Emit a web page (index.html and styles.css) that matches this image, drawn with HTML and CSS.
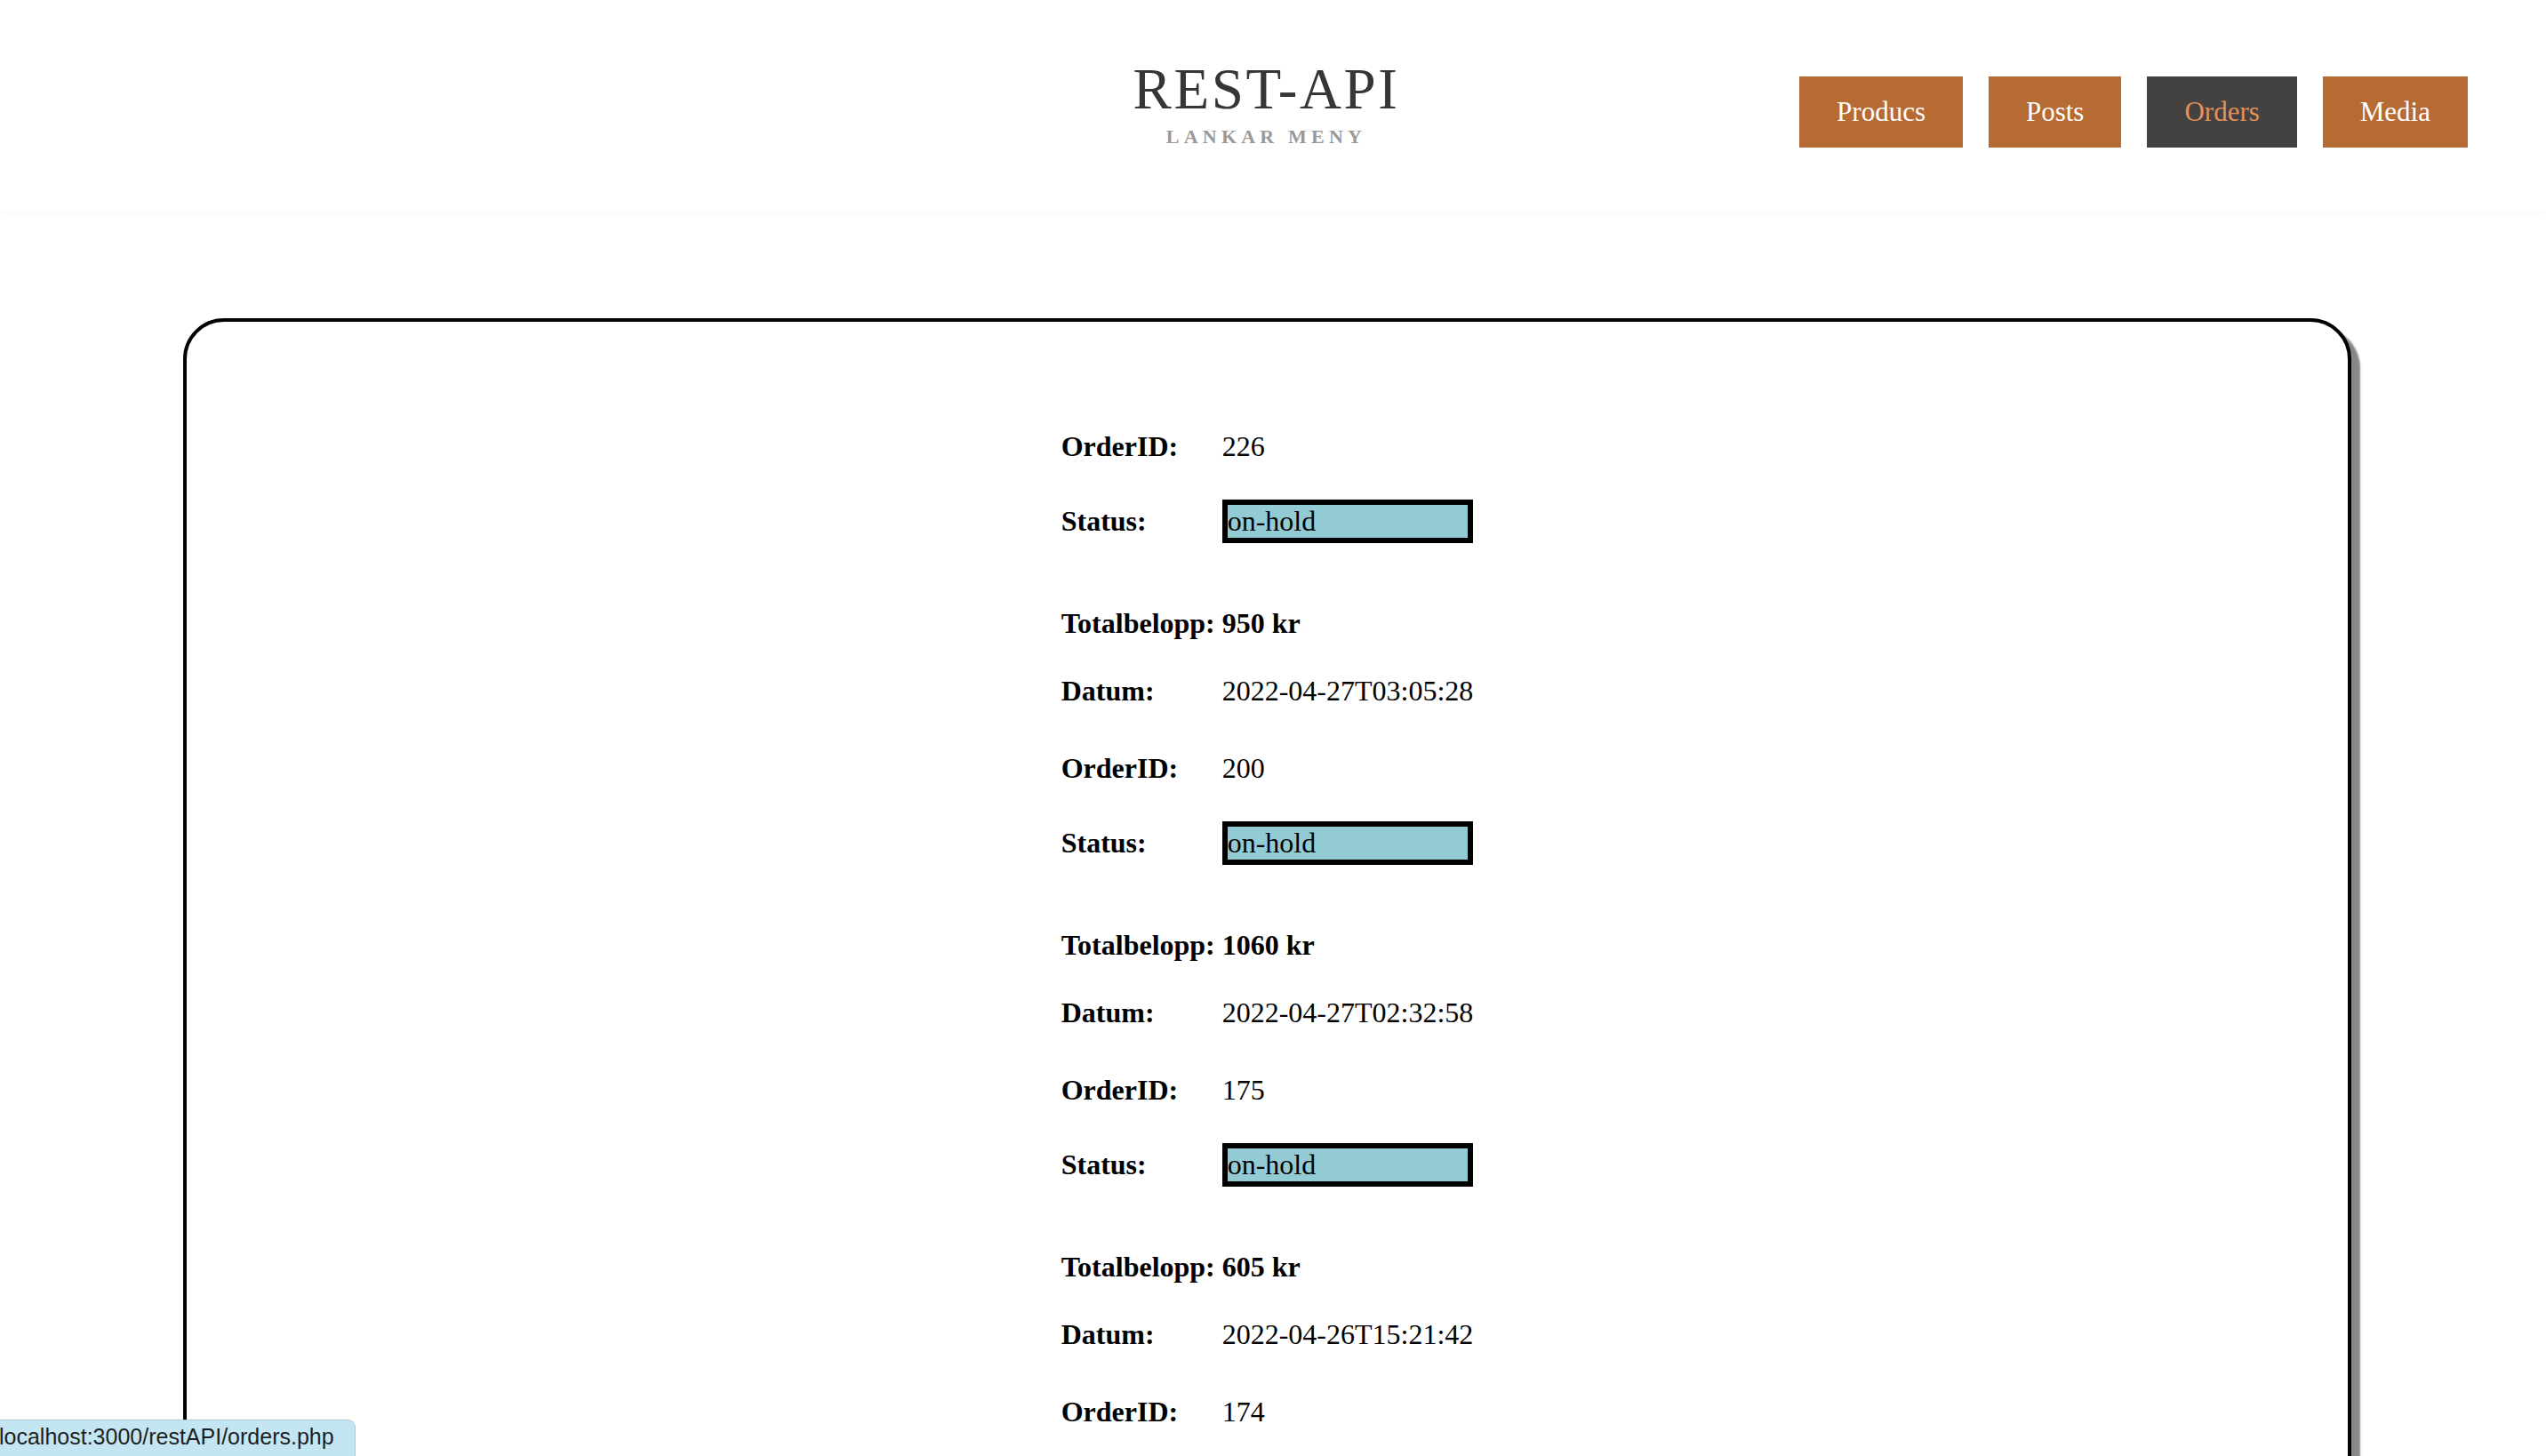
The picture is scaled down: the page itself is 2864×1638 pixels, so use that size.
FILE: index.html
```html
<!DOCTYPE html>
<html lang="sv">
<head>
<meta charset="utf-8">
<title>REST-API – Orders</title>
<link rel="stylesheet" href="styles.css">
</head>
<body>
<header class="site-header">
  <div class="header-side"></div>
  <div class="brand">
    <div class="brand-title">REST-API</div>
    <div class="brand-sub">LANKAR MENY</div>
  </div>
  <nav class="nav">
    <a class="nav-btn" href="#">Producs</a>
    <a class="nav-btn" href="#">Posts</a>
    <a class="nav-btn active" href="#">Orders</a>
    <a class="nav-btn" href="#">Media</a>
  </nav>
</header>

<main class="card">
  <table class="orders">
    <tbody>
      <tr class="row-id"><th>OrderID:</th><td>226</td></tr>
      <tr class="row-status"><th>Status:</th><td><span class="status">on-hold</span></td></tr>
      <tr class="row-total"><th>Totalbelopp:</th><th>950 kr</th></tr>
      <tr class="row-date"><th>Datum:</th><td>2022-04-27T03:05:28</td></tr>

      <tr class="row-id"><th>OrderID:</th><td>200</td></tr>
      <tr class="row-status"><th>Status:</th><td><span class="status">on-hold</span></td></tr>
      <tr class="row-total"><th>Totalbelopp:</th><th>1060 kr</th></tr>
      <tr class="row-date"><th>Datum:</th><td>2022-04-27T02:32:58</td></tr>

      <tr class="row-id"><th>OrderID:</th><td>175</td></tr>
      <tr class="row-status"><th>Status:</th><td><span class="status">on-hold</span></td></tr>
      <tr class="row-total"><th>Totalbelopp:</th><th>605 kr</th></tr>
      <tr class="row-date"><th>Datum:</th><td>2022-04-26T15:21:42</td></tr>

      <tr class="row-id"><th>OrderID:</th><td>174</td></tr>
      <tr class="row-status"><th>Status:</th><td><span class="status">on-hold</span></td></tr>
      <tr class="row-total"><th>Totalbelopp:</th><th>605 kr</th></tr>
      <tr class="row-date"><th>Datum:</th><td>2022-04-26T15:18:07</td></tr>
    </tbody>
  </table>
</main>

<div class="status-bubble">localhost:3000/restAPI/orders.php</div>
</body>
</html>
```

FILE: styles.css
```css
html, body {
  margin: 0;
  padding: 0;
  background: #ffffff;
}

body {
  font-family: "Liberation Serif", "Times New Roman", serif;
  color: #000000;
}

/* Header */
.site-header {
  position: relative;
  z-index: 1;
  height: 238px;
  background: #ffffff;
  display: grid;
  grid-template-columns: 1fr auto 1fr;
  align-items: start;
  box-shadow: 0 4px 10px rgba(0, 0, 0, 0.025);
}

.brand {
  padding-top: 68px;
  margin-right: 15px;
  text-align: center;
}

.brand-title {
  font-size: 65px;
  line-height: 65px;
  letter-spacing: 2.6px;
  color: #363636;
}

.brand-sub {
  margin-top: 10px;
  font-size: 22px;
  line-height: 22px;
  font-weight: bold;
  letter-spacing: 5.2px;
  color: #999999;
}

.nav {
  justify-self: end;
  display: flex;
  gap: 29px;
  padding-top: 86px;
  margin-right: 88px;
}

.nav-btn {
  display: block;
  padding: 24px 42px;
  font-size: 31px;
  line-height: 32px;
  color: #ffffff;
  background: #b66a34;
  text-decoration: none;
}

.nav-btn.active {
  background: #444241;
  color: #e3915a;
}

/* Card */
.card {
  margin: 120px 219px 0 206px;
  padding: 72px 0 130px;
  border: 4px solid #000000;
  border-radius: 46px;
  background: #ffffff;
  box-shadow: 10px 10px 2px #888888;
  display: flex;
  flex-direction: column;
  align-items: center;
}

.orders {
  border-collapse: collapse;
  border-spacing: 0;
  font-size: 32px;
  line-height: 37px;
}

.orders th,
.orders td {
  padding: 0;
  text-align: left;
  vertical-align: middle;
}

.orders th:first-child {
  width: 181px;
}

.orders td {
  font-weight: normal;
}

.row-id th,
.row-id td {
  padding-top: 50px;
}

.row-status th,
.row-status td {
  padding-top: 41px;
}

.row-total th {
  padding-top: 72px;
}

.row-date th,
.row-date td {
  padding-top: 39px;
}

.status {
  display: block;
  border: 6px solid #000000;
  background: #93cbd5;
  line-height: 37px;
}

/* Browser status bubble */
.status-bubble {
  position: fixed;
  left: -10px;
  bottom: 0;
  z-index: 5;
  padding: 0 23px 4px 8px;
  font-family: "Liberation Sans", Arial, sans-serif;
  font-size: 25px;
  line-height: 36px;
  color: #1e1e1e;
  background: #c3e6f2;
  border: 1px solid #a9ccd8;
  border-bottom: none;
  border-top-right-radius: 9px;
}
```
